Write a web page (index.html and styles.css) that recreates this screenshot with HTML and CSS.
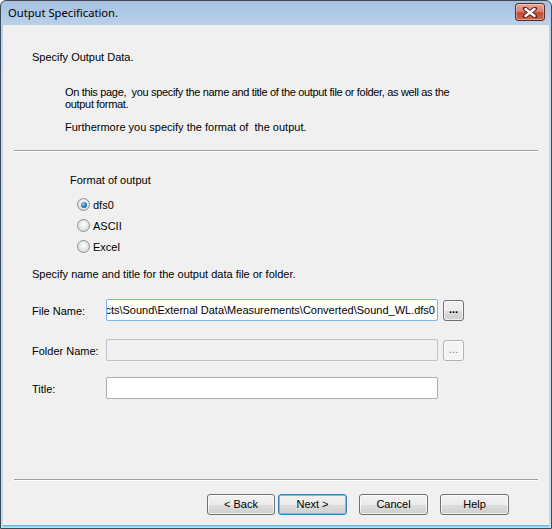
FILE: index.html
```html
<!DOCTYPE html>
<html>
<head>
<meta charset="utf-8">
<link rel="stylesheet" href="styles.css">
</head>
<body>
<div class="window">
  <div class="titlebar">
    <span class="title">Output Specification.</span>
    <div class="close">
      <svg width="16" height="11" viewBox="0 0 16 11"><path d="M3 1.5 L13 9.5 M13 1.5 L3 9.5" stroke="#5a1d17" stroke-width="4.2" stroke-linecap="round"/><path d="M3.5 2 L12.5 9 M12.5 2 L3.5 9" stroke="#ffffff" stroke-width="2.4" stroke-linecap="round"/></svg>
    </div>
  </div>
  <div class="client">
    <div class="main">
      <div class="heading">Specify Output Data.</div>
      <div class="desc">
        <p class="p1">On this page,&nbsp; you specify the name and title of the output file or folder, as well as the output format.</p>
        <p class="p2">Furthermore you specify the format of&nbsp; the output.</p>
      </div>
    </div>
    <div class="sep"></div>
    <div class="main">
      <div class="format-label">Format of output</div>
      <div class="radios">
        <label class="radio"><span class="dot checked"></span><span>dfs0</span></label>
        <label class="radio"><span class="dot"></span><span>ASCII</span></label>
        <label class="radio"><span class="dot"></span><span>Excel</span></label>
      </div>
      <div class="spec">Specify name and title for the output data file or folder.</div>
      <div class="form">
        <div class="lbl">File Name:</div>
        <div class="field focus"><span>cts\Sound\External Data\Measurements\Converted\Sound_WL.dfs0</span></div>
        <div class="browse">...</div>
        <div class="lbl r2">Folder Name:</div>
        <div class="field disabled r2"></div>
        <div class="browse disabled r2">...</div>
        <div class="lbl">Title:</div>
        <div class="field"></div>
        <div></div>
      </div>
    </div>
    <div class="spacer"></div>
    <div class="sep bottom"></div>
    <div class="buttons">
      <div class="btn">&lt; Back</div>
      <div class="btn default">Next &gt;</div>
      <div class="btn gap">Cancel</div>
      <div class="btn gap">Help</div>
    </div>
  </div>
</div>
</body>
</html>
```
FILE: styles.css
```css
html, body { margin: 0; padding: 0; }
body {
  width: 552px; height: 529px; overflow: hidden;
  font-family: "Liberation Sans", Arial, sans-serif;
  font-size: 11px; color: #000; background: #fff;
}
.window {
  box-sizing: border-box;
  width: 552px; height: 529px;
  border: 1px solid #3f4a57;
  border-radius: 6px 6px 0 0;
  background: linear-gradient(#a6c1e0 0px, #b9d1ea 24px, #c3daf0 100px, #c4dcf2 100%);
  padding: 0 2px 2px 2px;
  display: flex; flex-direction: column;
}
.titlebar {
  height: 24px; flex: none;
  display: flex; align-items: center; justify-content: space-between;
  padding: 0 4px 0 5px;
}
.title {
  font-family: "Noto Sans", "Open Sans", sans-serif;
  font-size: 11.2px; color: #000; margin-top: -1px;
}
.close {
  width: 30px; height: 18px; box-sizing: border-box;
  margin-top: -2px;
  border: 1px solid #5e2a26; border-radius: 3px;
  background: linear-gradient(#e8a899 0%, #d9826f 45%, #c24a30 55%, #d2694f 100%);
  box-shadow: inset 0 0 0 1px rgba(255,255,255,0.35);
  display: flex; align-items: center; justify-content: center;
}
.client {
  flex: 1;
  background: #f0f0f0;
  display: flex; flex-direction: column;
  border-bottom: 1px solid #5cbfe9;
  box-shadow: 0 1px 0 #8fd1ee;
}
.main { padding-left: 29px; }
.heading { margin-top: 26px; line-height: 13px; }
.desc { margin-left: 33px; }
.desc p { margin: 0; line-height: 12px; }
.p1 { margin-top: 22px !important; width: 400px; letter-spacing: -0.33px; }
.p2 { margin-top: 11px !important; }
.sep {
  height: 1px; background: #a0a0a0; border-bottom: 1px solid #fff;
  margin: 17px 11px 0 11px;
}
.format-label { margin: 22px 0 0 38px; line-height: 13px; }
.radios { margin: 7px 0 0 45px; display: flex; flex-direction: column; }
.radio { display: flex; align-items: center; height: 21px; gap: 3px; }
.dot {
  width: 11px; height: 11px; border-radius: 50%;
  border: 1px solid #8e8f8f;
  background: radial-gradient(circle at 50% 40%, #ffffff 0%, #e2e2e2 60%, #cfcfcf 100%);
  box-sizing: content-box;
  position: relative;
}
.dot.checked::after {
  content: ""; position: absolute; left: 2.5px; top: 2.5px;
  width: 6px; height: 6px; border-radius: 50%;
  background: radial-gradient(circle at 40% 35%, #8fd0f5 0%, #1f77c4 55%, #0c3f77 100%);
}
.spec { margin-top: 11px; line-height: 13px; }
.form {
  margin-top: 18px;
  display: grid;
  grid-template-columns: 69px 332px 21px;
  column-gap: 5px;
  row-gap: 16px;
  align-items: center;
}
.form .lbl { line-height: 13px; margin-top: 3px; }
.field {
  height: 22px; box-sizing: border-box;
  border: 1px solid #abadb3;
  background: #fff; border-radius: 2px;
  overflow: hidden; white-space: nowrap;
  display: flex; align-items: center; justify-content: flex-end;
  padding: 0 2px;
}
.field.focus { border-color: #7eb4ea; }
.field.disabled { background: #f0f0f0; border-color: #c3c3c3; }
.r2 { margin-top: 2px; }
.form .lbl.r2 { margin-top: 5px; }
.browse {
  width: 21px; height: 21px; box-sizing: border-box;
  border: 1px solid #707070; border-radius: 3px;
  background: linear-gradient(#f2f2f2 0%, #ebebeb 50%, #dddddd 51%, #cfcfcf 100%);
  font-weight: bold; text-align: center; line-height: 17px; font-size: 11px;
  box-shadow: inset 0 0 0 1px rgba(255,255,255,0.7);
}
.browse.disabled {
  background: #f4f4f4; border-color: #adb2b5; color: #838383; font-weight: normal;
}
.spacer { flex: 1; }
.sep.bottom { margin-top: 0; }
.buttons {
  display: flex; justify-content: flex-end;
  padding: 13px 40px 10px 0;
  gap: 3px;
}
.btn {
  width: 69px; height: 21px; box-sizing: border-box;
  border: 1px solid #707070; border-radius: 3px;
  background: linear-gradient(#f2f2f2 0%, #ebebeb 50%, #dddddd 51%, #cfcfcf 100%);
  box-shadow: inset 0 0 0 1px rgba(255,255,255,0.7);
  text-align: center; line-height: 19px;
}
.btn:first-child { width: 68px; }
.btn.default {
  border-color: #3c7fb1;
  box-shadow: inset 0 0 0 1px #48d0f5;
}
.btn.gap { margin-left: 9px; }
```
